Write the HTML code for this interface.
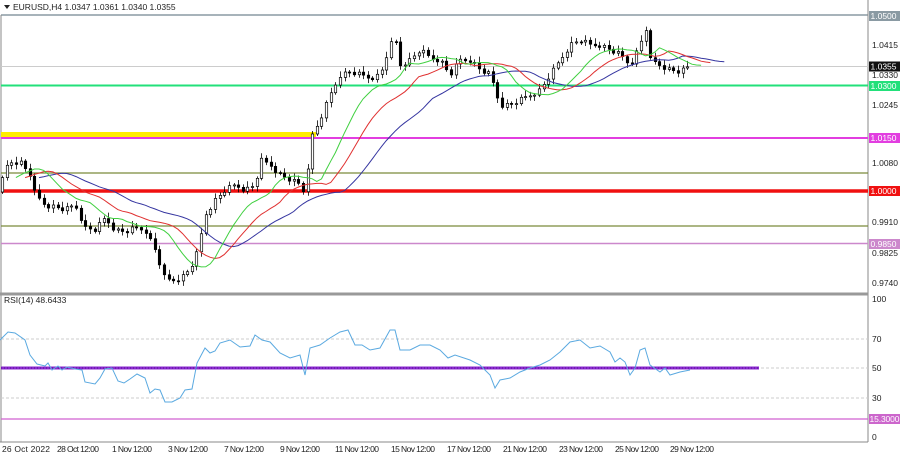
<!DOCTYPE html>
<html><head><meta charset="utf-8"><style>
body{margin:0;background:#fff;width:900px;height:455px;overflow:hidden;font-family:"Liberation Sans",sans-serif}
svg{display:block}
text{font-family:"Liberation Sans",sans-serif;font-size:8.5px;fill:#222}
</style></head><body>
<svg id="s" width="900" height="455" viewBox="0 0 900 455">
<rect width="900" height="455" fill="#fff"/>
<line x1="1" y1="15" x2="868" y2="15" stroke="#8a9aa3" stroke-width="1.5"/>
<line x1="1" y1="15" x2="1" y2="442" stroke="#888"/>
<line x1="868" y1="0" x2="868" y2="442" stroke="#888"/>
<line x1="0" y1="294" x2="868" y2="294" stroke="#999" stroke-width="3"/>
<line x1="0" y1="442" x2="868" y2="442" stroke="#888"/>
<line x1="1" y1="66.5" x2="868" y2="66.5" stroke="#ccc"/>
<line x1="1" y1="85.5" x2="868" y2="85.5" stroke="#22e07a" stroke-width="2"/>
<rect x="1" y="132" width="315" height="5" fill="#ffee00"/>
<line x1="1" y1="138" x2="868" y2="138" stroke="#e23ee0" stroke-width="2"/>
<line x1="1" y1="173" x2="868" y2="173" stroke="#7a8a3a" stroke-width="1.3"/>
<line x1="1" y1="191" x2="868" y2="191" stroke="#f01010" stroke-width="3.5"/>
<line x1="1" y1="226" x2="868" y2="226" stroke="#7a8a3a" stroke-width="1.3"/>
<line x1="1" y1="243.5" x2="868" y2="243.5" stroke="#cc88cc" stroke-width="1.5"/>
<g id="g"></g>
<line x1="1" y1="339" x2="868" y2="339" stroke="#ccc" stroke-dasharray="3,2"/>
<line x1="1" y1="368" x2="868" y2="368" stroke="#ccc" stroke-dasharray="3,2"/>
<line x1="1" y1="398" x2="868" y2="398" stroke="#ccc" stroke-dasharray="3,2"/>
<line x1="1" y1="419" x2="868" y2="419" stroke="#d060d0" stroke-width="1.3"/>
<line x1="1" y1="368" x2="759" y2="368" stroke="#8a2ad0" stroke-width="3"/>
<line x1="1" y1="368" x2="759" y2="368" stroke="#5a0a90" stroke-width="1" stroke-dasharray="1,2"/>
<polyline fill="none" stroke="#5aa9e0" stroke-width="1" points="0,340 8,332 15,333 25,340 30,355 37,364 45,366 48,363 52,370 58,366 62,370 67,367 75,369 82,370 85,382 95,384 100,378 105,369 112,368 118,381 124,383 130,379 137,374 145,378 150,393 155,389 160,390 165,402 172,402 180,398 185,390 192,389 197,363 205,348 210,353 215,351 220,343 230,340 240,347 250,346 255,335 262,340 270,342 280,353 290,358 300,355 305,375 310,348 320,345 330,338 340,332 348,330 355,345 362,345 370,350 380,348 390,330 395,330 400,350 410,350 420,345 430,345 440,350 448,358 455,355 470,360 480,365 490,375 495,388 500,380 510,378 520,372 530,368 540,365 550,360 560,352 570,342 580,340 590,348 600,346 610,352 615,362 620,358 625,362 630,375 635,368 640,350 645,348 650,365 660,372 665,368 670,375 680,372 690,370"/>
<text x="4" y="303">RSI(14) 48.6433</text>
<path d="M4 5 L10 5 L7 9 Z" fill="#222"/>
<text x="13" y="10">EURUSD,H4  1.0347 1.0361 1.0340 1.0355</text>
<g>
<rect x="869" y="11" width="31" height="10" fill="#8a9aa3"/><text x="870.5" y="19" style="fill:#fff">1.0500</text>
<text x="872" y="48">1.0415</text>
<rect x="869" y="61.5" width="31" height="10" fill="#111"/><text x="870.5" y="69.5" style="fill:#fff">1.0355</text>
<text x="872" y="78">1.0330</text>
<rect x="869" y="81" width="31" height="10" fill="#22e07a"/><text x="870.5" y="89" style="fill:#fff">1.0300</text>
<text x="872" y="108">1.0245</text>
<rect x="869" y="133" width="31" height="10" fill="#e23ee0"/><text x="870.5" y="141" style="fill:#fff">1.0150</text>
<text x="872" y="166">1.0080</text>
<rect x="869" y="186" width="31" height="10" fill="#f01010"/><text x="870.5" y="194" style="fill:#fff">1.0000</text>
<text x="872" y="225">0.9910</text>
<rect x="869" y="239" width="31" height="10" fill="#cc88cc"/><text x="870.5" y="247" style="fill:#fff">0.9850</text>
<text x="872" y="256">0.9825</text>
<text x="872" y="286">0.9740</text>
<text x="872" y="302">100</text>
<text x="872" y="342">70</text>
<text x="872" y="371">50</text>
<text x="872" y="401">30</text>
<rect x="869" y="414" width="31" height="10" fill="#cc66cc"/><text x="869.5" y="422" style="fill:#fff" textLength="30">15.3000</text>
<text x="872" y="440">0</text>
</g>
<g>
<text x="2" y="452" textLength="48">26 Oct 2022</text>
<text x="57" y="452" textLength="42">28 Oct 12:00</text>
<text x="112" y="452" textLength="40">1 Nov 12:00</text>
<text x="168" y="452" textLength="40">3 Nov 12:00</text>
<text x="224" y="452" textLength="40">7 Nov 12:00</text>
<text x="280" y="452" textLength="40">9 Nov 12:00</text>
<text x="335" y="452" textLength="44">11 Nov 12:00</text>
<text x="391" y="452" textLength="44">15 Nov 12:00</text>
<text x="447" y="452" textLength="44">17 Nov 12:00</text>
<text x="503" y="452" textLength="44">21 Nov 12:00</text>
<text x="559" y="452" textLength="44">23 Nov 12:00</text>
<text x="615" y="452" textLength="44">25 Nov 12:00</text>
<text x="670" y="452" textLength="44">29 Nov 12:00</text>
</g>
</svg>
<script>
var P=[[2,180],[8,162],[20,162],[30,175],[35,195],[45,205],[55,207],[65,210],[75,205],[85,228],[95,230],[105,218],[115,230],[125,232],[135,228],[145,230],[155,250],[165,280],[175,280],[185,275],[195,260],[200,240],[205,215],[215,200],[225,190],[235,185],[245,190],[255,185],[260,160],[270,165],[280,175],[290,180],[300,185],[305,195],[310,140],[320,120],[330,95],[340,75],[350,72],[360,75],[370,78],[380,75],[390,45],[395,40],[400,65],[410,60],[420,50],[430,58],[440,60],[450,75],[460,60],[470,60],[480,70],[490,75],[500,105],[510,105],[520,100],[530,95],[540,90],[550,75],[560,60],[570,45],[580,40],[590,45],[600,45],[610,50],[620,55],[630,65],[640,45],[645,25],[650,60],[660,65],[670,70],[680,72],[690,66]];
function f(x){for(var i=0;i<P.length-1;i++){if(x<=P[i+1][0]){var a=P[i],b=P[i+1];return a[1]+(b[1]-a[1])*(x-a[0])/(b[0]-a[0]);}}return P[P.length-1][1];}
var st=4.63,g='',C=[],prev=f(0)+6;
for(var k=0;k*st+2<=690;k++){var x=2+k*st,c=f(x)+((k*37)%7-3)*0.8,o=prev;var hi=Math.min(o,c)-2-(k*13%5),lo=Math.max(o,c)+2+(k*17%4);var X=Math.round(x)+0.5;
g+='<line x1="'+X+'" y1="'+hi+'" x2="'+X+'" y2="'+lo+'" stroke="#000" stroke-width="0.8"/>';var t=Math.min(o,c),h=Math.max(Math.abs(o-c),1);
g+='<rect x="'+(X-1.2)+'" y="'+t+'" width="2.4" height="'+h+'" fill="'+(c>o?'#000':'#fff')+'" stroke="#000" stroke-width="0.7"/>';C.push(c);prev=c;}
function sm(n,sh){var v=C[0],pts=[];for(var i=0;i<C.length;i++){v=(v*(n-1)+C[i])/n;pts.push((2+(i+sh)*st).toFixed(1)+','+v.toFixed(1));}return pts.join(' ');}
g+='<polyline fill="none" stroke="#3535a0" points="'+sm(13,8)+'"/>';
g+='<polyline fill="none" stroke="#e03030" points="'+sm(8,5)+'"/>';
g+='<polyline fill="none" stroke="#40d040" points="'+sm(5,3)+'"/>';
document.getElementById('g').innerHTML=g;
</script>
</body></html>
